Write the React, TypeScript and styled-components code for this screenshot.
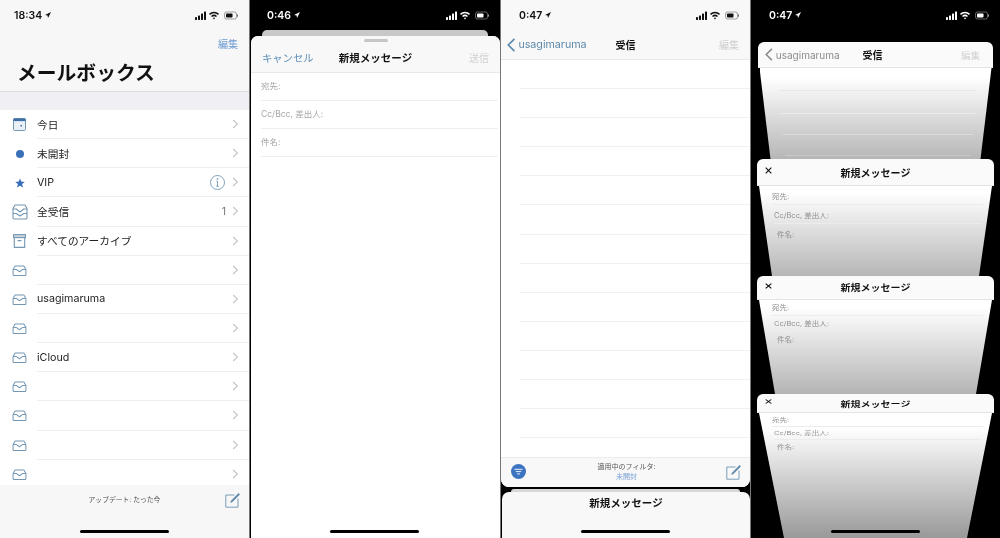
import React from "react";
import styled, { createGlobalStyle } from "styled-components";

const Global = createGlobalStyle`
  html, body { margin: 0; padding: 0; background: #000; }
  body { font-family: "Inter", "Noto Sans CJK JP", sans-serif; color: #111; }
  * { box-sizing: border-box; }
`;

const Page = styled.div`
  display: grid;
  grid-template-columns: repeat(4, 250px);
  width: 1000px;
  height: 538px;
  overflow: hidden;
  filter: blur(0.3px);
`;

const Panel = styled.section<{ $bg: string; $edge?: "left" | "right" }>`
  position: relative;
  display: flex;
  flex-direction: column;
  height: 538px;
  overflow: hidden;
  background: ${(p) => p.$bg};
  ${(p) => (p.$edge ? `border-${p.$edge}: 1px solid #77777a;` : "")}
`;

const StatusRow = styled.div<{ $dark?: boolean; $pad: number; $bg?: string }>`
  flex: none;
  display: flex;
  align-items: center;
  justify-content: space-between;
  height: 30px;
  padding: 0 10px 0 ${(p) => p.$pad}px;
  color: ${(p) => (p.$dark ? "#fff" : "#111")};
  background: ${(p) => p.$bg || "transparent"};
  font-size: 10.5px;
  font-weight: 600;
`;
const Clock = styled.span`
  display: flex;
  align-items: center;
  gap: 3px;
`;

function Arrow() {
  return (
    <svg width="6" height="6" viewBox="0 0 6 6" fill="currentColor">
      <path d="M6 0 0 3l2.6.4L3 6z" />
    </svg>
  );
}
function Indicators() {
  return (
    <svg width="44" height="9" viewBox="0 0 44 9" fill="currentColor">
      <rect x="0" y="6" width="2" height="3" rx=".4" />
      <rect x="3" y="4.5" width="2" height="4.5" rx=".4" />
      <rect x="6" y="2.5" width="2" height="6.5" rx=".4" />
      <rect x="9" y="0.5" width="2" height="8.5" rx=".4" />
      <path d="M14 2.8a7.4 7.4 0 0 1 10 0l-1 1.1a6 6 0 0 0-8 0zM16 5a4.4 4.4 0 0 1 6 0l-1 1.1a3 3 0 0 0-4 0zM17.9 7a1.6 1.6 0 0 1 2.2 0L19 8.4z" />
      <rect x="29.5" y="1" width="12" height="7" rx="2" fill="none" stroke="currentColor" strokeWidth=".7" opacity=".55" />
      <rect x="31" y="2.5" width="6.5" height="4" rx=".8" />
      <rect x="42" y="3.3" width="1" height="2.4" rx=".5" opacity=".6" />
    </svg>
  );
}
function Status({ time, dark, pad, bg }: { time: string; dark?: boolean; pad: number; bg?: string }) {
  return (
    <StatusRow $dark={dark} $pad={pad} $bg={bg}>
      <Clock>
        {time}
        <Arrow />
      </Clock>
      <Indicators />
    </StatusRow>
  );
}

const HomeBar = styled.div`
  position: absolute;
  left: 50%;
  bottom: 5px;
  width: 89px;
  height: 3px;
  margin-left: -45px;
  border-radius: 2px;
  background: #000;
`;

/* ---------- Panel 1 ---------- */
const MailHead = styled.header`
  flex: none;
  height: 62px;
  padding: 7px 11px 0 17px;
  background: #f7f7f8;
  border-bottom: 1px solid #d9d9de;
`;
const EditLink = styled.div`
  text-align: right;
  font-size: 10px;
  line-height: 14px;
  color: #6d9dcf;
`;
const LargeTitle = styled.h1`
  margin: 8px 0 0;
  font-size: 19.8px;
  line-height: 28px;
  font-weight: 700;
  color: #111;
`;
const GroupGap = styled.div`
  flex: none;
  height: 18px;
  background: #efeff4;
`;
const MailList = styled.ul`
  flex: 1;
  min-height: 0;
  margin: 0;
  padding: 0;
  list-style: none;
  overflow: hidden;
  background: #fff;
`;
const MailRow = styled.li`
  display: flex;
  align-items: center;
  height: 29.15px;
`;
const RowIcon = styled.span`
  flex: none;
  display: flex;
  justify-content: center;
  width: 37px;
  padding-left: 2px;
`;
const RowBody = styled.div`
  flex: 1;
  align-self: stretch;
  display: flex;
  align-items: center;
  gap: 4px;
  padding-right: 10px;
  border-bottom: 1px solid #efeff1;
`;
const RowLabel = styled.span`
  flex: 1;
  font-size: 10.7px;
  color: #222;
`;
const RowCount = styled.span`
  font-size: 10.5px;
  color: #777;
  margin-right: 2px;
`;
const InfoSlot = styled.span`
  display: flex;
  margin-right: 3px;
`;
const MailFooter = styled.footer`
  flex: none;
  display: flex;
  align-items: flex-start;
  height: 53px;
  padding: 7px 8px 0 0;
  background: #f7f7f8;
`;
const UpdateText = styled.span`
  flex: 1;
  text-align: center;
  padding-left: 24px;
  line-height: 16px;
  font-size: 6.8px;
  color: #555;
`;

function Chevron() {
  return (
    <svg width="7" height="10" viewBox="0 0 7 10" fill="none" stroke="#c4c4c8" strokeWidth="1.1">
      <path d="M1.2 1 5.4 5 1.2 9" />
    </svg>
  );
}
const BLUE = "#7498b4";
function Tray() {
  return (
    <svg width="15" height="11" viewBox="0 0 16 12" fill="none" stroke={BLUE} strokeWidth="1.1" strokeLinejoin="round">
      <path d="M3.2 1h9.6L15 5v5.6a.9.9 0 0 1-.9.9H1.9a.9.9 0 0 1-.9-.9V5z" />
      <path d="M1.2 4.8h3.2L8 7.4l3.6-2.6h3.2" />
    </svg>
  );
}
function AllTray() {
  return (
    <svg width="16" height="16" viewBox="0 0 16 16" fill="none" stroke={BLUE} strokeWidth="1.1" strokeLinejoin="round">
      <path d="M3 1h10l2 3.6V14a1 1 0 0 1-1 1H2a1 1 0 0 1-1-1V4.6z" />
      <path d="M1 5h3.2L8 8l3.8-3H15M1 9.5h3.2L8 12l3.8-2.5H15" />
    </svg>
  );
}
function Today() {
  return (
    <svg width="13" height="13" viewBox="0 0 13 13">
      <rect x=".5" y=".5" width="12" height="12" rx="1.2" fill="#eaf0f5" stroke={BLUE} />
      <rect x=".5" y=".5" width="12" height="2.6" fill="#3f6fa8" />
      <rect x="7.5" y="7" width="1.5" height="1.5" fill="#3f6fa8" />
    </svg>
  );
}
function Dot() {
  return (
    <svg width="8" height="8" viewBox="0 0 8 8">
      <circle cx="4" cy="4" r="4" fill="#3a70b8" />
    </svg>
  );
}
function Star() {
  return (
    <svg width="10" height="10" viewBox="0 0 10 10">
      <path d="M5 .4 6.3 3.6 9.8 3.9 7.1 6.1 8 9.6 5 7.7 2 9.6 2.9 6.1.2 3.9 3.7 3.6z" fill="#3a70b8" />
    </svg>
  );
}
function Archive() {
  return (
    <svg width="13" height="14" viewBox="0 0 13 14" fill="none" stroke={BLUE} strokeWidth="1.1">
      <rect x=".6" y=".6" width="11.8" height="3" fill="#c9d6e0" />
      <path d="M1.3 3.6v9.8h10.4V3.6M4.5 6.6h4" />
    </svg>
  );
}
function Info() {
  return (
    <svg width="15" height="15" viewBox="0 0 15 15" fill="none" stroke="#6f98b5" strokeWidth=".9">
      <circle cx="7.5" cy="7.5" r="7" />
      <path d="M7.5 6.2v5M6.3 6.2h1.2M6.2 11.2h2.6" />
      <circle cx="7.5" cy="3.9" r=".5" fill="#6f98b5" />
    </svg>
  );
}
function Compose() {
  return (
    <svg width="16" height="16" viewBox="0 0 16 16" fill="none" stroke="#6d93b0" strokeWidth=".9">
      <path d="M9.5 3H.8v12.2H13V6.5" />
      <path d="M5.2 10.8l.6-1.9 7.8-7.8 1.3 1.3-7.8 7.8z" fill="#5f87a8" stroke="none" />
    </svg>
  );
}

const mailRows: { icon: React.ReactNode; label: string; extra?: React.ReactNode }[] = [
  { icon: <Today />, label: "今日" },
  { icon: <Dot />, label: "未開封" },
  { icon: <Star />, label: "VIP", extra: <InfoSlot><Info /></InfoSlot> },
  { icon: <AllTray />, label: "全受信", extra: <RowCount>1</RowCount> },
  { icon: <Archive />, label: "すべてのアーカイブ" },
  { icon: <Tray />, label: "" },
  { icon: <Tray />, label: "usagimaruma" },
  { icon: <Tray />, label: "" },
  { icon: <Tray />, label: "iCloud" },
  { icon: <Tray />, label: "" },
  { icon: <Tray />, label: "" },
  { icon: <Tray />, label: "" },
  { icon: <Tray />, label: "" },
];

/* ---------- Panel 2 ---------- */
const BackSheet = styled.div<{ $inset: number; $h: number; $bg: string; $top?: number }>`
  flex: none;
  height: ${(p) => p.$h}px;
  margin: ${(p) => p.$top || 0}px ${(p) => p.$inset}px 0;
  border-radius: 5px 5px 0 0;
  background: ${(p) => p.$bg};
`;
const Sheet = styled.div<{ $bg?: string }>`
  flex: 1;
  display: flex;
  flex-direction: column;
  margin-left: 1px;
  border-radius: 7px 7px 0 0;
  overflow: hidden;
  background: ${(p) => p.$bg || "#fff"};
`;
const SheetHead = styled.header`
  flex: none;
  background: #f8f8f8;
  border-bottom: 1px solid #e8e8e8;
  height: 37px;
`;
const Grabber = styled.div`
  width: 24px;
  height: 3px;
  margin: 3px auto 0;
  border-radius: 2px;
  background: #c6c6c6;
`;
const NavGrid = styled.div<{ $h: number; $pad: number }>`
  display: grid;
  grid-template-columns: 1fr auto 1fr;
  align-items: center;
  height: ${(p) => p.$h}px;
  padding: 0 ${(p) => p.$pad}px;
`;
const NavTitle = styled.strong<{ $size?: number; $squash?: number }>`
  font-size: ${(p) => p.$size || 10.5}px;
  font-weight: 700;
  color: #111;
  transform: scaleY(${(p) => p.$squash || 1});
`;
const NavLink = styled.span<{ $color: string; $size?: number; $shift?: number }>`
  display: flex;
  align-items: center;
  margin-left: ${(p) => p.$shift || 0}px;
  font-size: ${(p) => p.$size || 10.3}px;
  color: ${(p) => p.$color};
`;
const NavEnd = styled(NavLink)`
  justify-content: flex-end;
`;
const FieldRow = styled.div`
  display: flex;
  align-items: center;
  height: 28px;
  margin: 0 2px 0 10px;
  padding-bottom: 4px;
  border-bottom: 1px solid #efefef;
  font-size: 8.5px;
  color: #a6a6a6;
`;

/* ---------- Panel 3 ---------- */
const InboxCard = styled.div`
  flex: none;
  display: flex;
  flex-direction: column;
  height: 487px;
  overflow: hidden;
  background: #fff;
  border-radius: 0 0 8px 8px;
`;
const InboxNav = styled(NavGrid)`
  flex: none;
  background: #f8f8f8;
  border-bottom: 1px solid #e9e9e9;
`;
const BlankList = styled.div`
  flex: 1;
  min-height: 0;
  overflow: hidden;
`;
const BlankRow = styled.div`
  height: 29.1px;
  margin-left: 19px;
  border-bottom: 1px solid #f0f0f2;
`;
const InboxFooter = styled.footer`
  flex: none;
  display: grid;
  grid-template-columns: 1fr auto 1fr;
  align-items: center;
  height: 30px;
  padding: 0 8px 2px 10px;
  background: #f8f8f8;
  border-top: 1px solid #ececec;
`;
const FilterText = styled.div`
  text-align: center;
  font-size: 7px;
  line-height: 10px;
  color: #555;
`;
const FilterValue = styled.div`
  color: #7ba3d4;
`;
const EndSlot = styled.span`
  display: flex;
  justify-content: flex-end;
`;
const PeekTitle = styled.div`
  padding-top: 4px;
  text-align: center;
  line-height: 16px;
  font-size: 10.5px;
  font-weight: 700;
`;

const FilterSvg = styled.svg`
  display: block;
`;
function FilterIcon() {
  return (
    <FilterSvg width="15" height="15" viewBox="0 0 15 15" fill="none" stroke="#fff" strokeWidth=".9">
      <circle cx="7.5" cy="7.5" r="7.5" fill="#3c74c2" stroke="none" />
      <path d="M3.5 5.3h8M4.8 7.6h5.4M6.1 9.9h2.8" />
    </FilterSvg>
  );
}
const BackSvg = styled.svg`
  flex: none;
  margin-right: 3px;
`;
function BackArrow({ color, h }: { color: string; h: number }) {
  return (
    <BackSvg width={h * 0.6} height={h} viewBox="0 0 9 15" fill="none" stroke={color} strokeWidth="1.8">
      <path d="M8 1 1.4 7.5 8 14" />
    </BackSvg>
  );
}

/* ---------- Panel 4 ---------- */
const StackTop = styled.div`
  flex: none;
  height: 12px;
`;
const StackCard = styled.article<{ $h: number }>`
  flex: none;
  display: flex;
  flex-direction: column;
  align-items: center;
  height: ${(p) => p.$h}px;
`;
const CardHead = styled.header<{ $w: number; $h: number; $pad: number }>`
  flex: none;
  display: grid;
  grid-template-columns: 1fr auto 1fr;
  align-items: center;
  width: ${(p) => p.$w}px;
  height: ${(p) => p.$h}px;
  padding: 0 ${(p) => p.$pad}px 0 7px;
  background: #fafafa;
  border-radius: 6px 6px 0 0;
  border-bottom: 1px solid #e3e3e3;
`;
const CardBody = styled.div<{ $w: number; $taper: number; $start: number; $end: string }>`
  flex: 1;
  min-height: 0;
  width: ${(p) => p.$w}px;
  display: flex;
  flex-direction: column;
  overflow: hidden;
  background: linear-gradient(#fff ${(p) => p.$start}%, ${(p) => p.$end} 100%);
  clip-path: polygon(0 0, 100% 0, calc(100% - ${(p) => p.$taper}px) 100%, ${(p) => p.$taper}px 100%);
`;
const StackLine = styled.div<{ $h: number; $indent: number; $rule?: string }>`
  flex: none;
  height: ${(p) => p.$h}px;
  margin: 0 ${(p) => p.$indent - 4}px 0 ${(p) => p.$indent}px;
  border-bottom: 1px solid ${(p) => p.$rule || "#eeeeee"};
`;
const StackField = styled(StackLine)<{ $squash: number }>`
  display: flex;
  align-items: center;
  font-size: 7.5px;
  color: #8f8f8f;
  & > span {
    display: block;
    transform: scaleY(${(p) => p.$squash});
    transform-origin: left center;
  }
`;
const CrossSlot = styled.span<{ $lift: number }>`
  display: flex;
  margin: -${(p) => p.$lift}px 0 0 1px;
`;
function Cross({ size }: { size: number }) {
  return (
    <svg width="7" height={size} viewBox="0 0 8 8" preserveAspectRatio="none" fill="none" stroke="#111" strokeWidth="1.3">
      <path d="M.8.8l6.4 6.4M7.2.8.8 7.2" />
    </svg>
  );
}

const stackCards = [
  { h: 117, head: 27, taper: 13, start: 8, end: "#b6b6b6", line: 19, indents: [13, 15, 18], squash: 0.95, cross: 7, titleSquash: 1, lift: 4 },
  { h: 118, head: 24, taper: 16, start: 8, end: "#b4b4b4", line: 16, indents: [13, 15, 18], squash: 0.85, cross: 6, titleSquash: 0.88, lift: 4 },
  { h: 144, head: 19, taper: 25, start: 12, end: "#999999", line: 13.5, indents: [13, 15, 18], squash: 0.7, cross: 5, titleSquash: 0.75, lift: 3 },
];
const fieldNames = ["宛先:", "Cc/Bcc, 差出人:", "件名:"];

export default function App() {
  return (
    <>
      <Global />
      <Page>
        <Panel $bg="#f7f7f8" $edge="right">
          <Status time="18:34" pad={14} />
          <MailHead>
            <EditLink>編集</EditLink>
            <LargeTitle>メールボックス</LargeTitle>
          </MailHead>
          <GroupGap />
          <MailList>
            {mailRows.map((r, i) => (
              <MailRow key={i}>
                <RowIcon>{r.icon}</RowIcon>
                <RowBody>
                  <RowLabel>{r.label}</RowLabel>
                  {r.extra}
                  <Chevron />
                </RowBody>
              </MailRow>
            ))}
          </MailList>
          <MailFooter>
            <UpdateText>アップデート: たった今</UpdateText>
            <Compose />
          </MailFooter>
          <HomeBar />
        </Panel>

        <Panel $bg="#000">
          <Status time="0:46" dark pad={17} />
          <BackSheet $inset={12} $h={6} $bg="#c8c8c8" />
          <Sheet>
            <SheetHead>
              <Grabber />
              <NavGrid $h={31} $pad={11}>
                <NavLink $color="#5d8fb8">キャンセル</NavLink>
                <NavTitle>新規メッセージ</NavTitle>
                <NavEnd $color="#d0d0d0" $size={10}>送信</NavEnd>
              </NavGrid>
            </SheetHead>
            <FieldRow>宛先:</FieldRow>
            <FieldRow>Cc/Bcc, 差出人:</FieldRow>
            <FieldRow>件名:</FieldRow>
          </Sheet>
          <HomeBar />
        </Panel>

        <Panel $bg="#000" $edge="left">
          <InboxCard>
            <Status time="0:47" pad={18} bg="#f8f8f8" />
            <InboxNav $h={30} $pad={11}>
              <NavLink $color="#5b88aa" $size={10.7} $shift={-5}>
                <BackArrow color="#5b88aa" h={14} />
                usagimaruma
              </NavLink>
              <NavTitle $size={10}>受信</NavTitle>
              <NavEnd $color="#cfcfcf" $size={10}>編集</NavEnd>
            </InboxNav>
            <BlankList>
              {Array.from({ length: 13 }, (_, i) => (
                <BlankRow key={i} />
              ))}
            </BlankList>
            <InboxFooter>
              <FilterIcon />
              <FilterText>
                適用中のフィルタ:
                <FilterValue>未開封</FilterValue>
              </FilterText>
              <EndSlot>
                <Compose />
              </EndSlot>
            </InboxFooter>
          </InboxCard>
          <BackSheet $inset={10} $h={3} $bg="#d8d8d8" $top={2} />
          <Sheet $bg="#f8f8f8">
            <PeekTitle>新規メッセージ</PeekTitle>
          </Sheet>
          <HomeBar />
        </Panel>

        <Panel $bg="#000" $edge="left">
          <Status time="0:47" dark pad={18} />
          <StackTop />
          <StackCard $h={117}>
            <CardHead $w={235} $h={26} $pad={13}>
              <NavLink $color="#8c8c8c" $size={10}>
                <BackArrow color="#8c8c8c" h={13} />
                usagimaruma
              </NavLink>
              <NavTitle $size={10}>受信</NavTitle>
              <NavEnd $color="#d2d2d2" $size={9.5}>編集</NavEnd>
            </CardHead>
            <CardBody $w={232} $taper={11} $start={10} $end="#b6b6b6">
              <StackLine $h={23} $indent={19} $rule="#e8e8e8" />
              <StackLine $h={23} $indent={21} $rule="rgba(255,255,255,.4)" />
              <StackLine $h={21} $indent={23} $rule="rgba(255,255,255,.3)" />
              <StackLine $h={21} $indent={25} $rule="rgba(255,255,255,.25)" />
            </CardBody>
          </StackCard>
          {stackCards.map((c, i) => (
            <StackCard key={i} $h={c.h}>
              <CardHead $w={237} $h={c.head} $pad={7}>
                <CrossSlot $lift={c.lift}>
                  <Cross size={c.cross} />
                </CrossSlot>
                <NavTitle $size={10} $squash={c.titleSquash}>新規メッセージ</NavTitle>
                <span />
              </CardHead>
              <CardBody $w={233} $taper={c.taper} $start={c.start} $end={c.end}>
                {c.indents.map((ind, j) => (
                  <StackField key={j} $h={c.line} $indent={ind} $squash={c.squash} $rule={j === 2 ? "transparent" : "#ececec"}>
                    <span>{fieldNames[j]}</span>
                  </StackField>
                ))}
              </CardBody>
            </StackCard>
          ))}
          <HomeBar />
        </Panel>
      </Page>
    </>
  );
}
